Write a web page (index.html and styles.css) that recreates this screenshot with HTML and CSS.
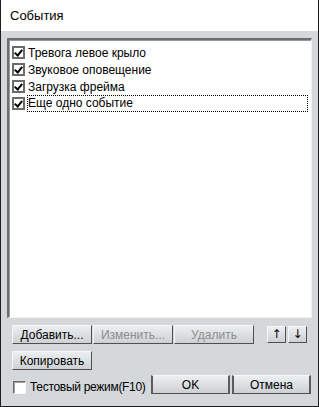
FILE: index.html
```html
<!DOCTYPE html>
<html lang="ru">
<head>
    <meta charset="UTF-8">
    <title>События</title>
    <link rel="stylesheet" href="styles.css">
</head>
<body>
    <div class="window">
        <div class="titlebar">События</div>
        <div class="content">
            <ul class="list">
                <li class="item"><span class="check on"></span>Тревога левое крыло</li>
                <li class="item"><span class="check on"></span>Звуковое оповещение</li>
                <li class="item"><span class="check on"></span>Загрузка фрейма</li>
                <li class="item focus"><span class="check on"></span><span class="label">Еще одно событие</span></li>
            </ul>

            <div class="row">
                <button class="btn">Добавить...</button>
                <button class="btn" disabled>Изменить...</button>
                <button class="btn" disabled>Удалить</button>
                <div class="arrows">
                    <button class="btn small">&#8593;</button>
                    <button class="btn small">&#8595;</button>
                </div>
            </div>

            <div class="row">
                <button class="btn">Копировать</button>
            </div>

            <div class="row footer">
                <label class="test"><span class="check"></span>Тестовый режим(F10)</label>
                <div class="dialog-btns">
                    <button class="btn edge">OK</button>
                    <button class="btn edge">Отмена</button>
                </div>
            </div>
        </div>
    </div>
</body>
</html>
```

FILE: styles.css
```css
body { margin: 0; font-family: "Liberation Sans", Arial, sans-serif; font-size: 12px; color: #000; background: #fff; }

.window { width: 319px; height: 407px; box-sizing: border-box; border: 1px solid #1e1e1e; border-top: none; display: flex; flex-direction: column; }
.titlebar { height: 31px; background: #fff; padding-left: 9px; line-height: 32px; font-size: 13px; }
.content { flex: 1; background: #d4d8db; padding: 7px 6px 0 6px; display: flex; flex-direction: column; }

.list { list-style: none; margin: 0; padding: 4px 3px 0 3px; height: 280px; box-sizing: border-box; background: #fff;
    border-top: 2px solid #6e6e6e; border-left: 2px solid #6e6e6e; border-right: 1px solid #f0f0f0; border-bottom: 1px solid #f0f0f0;
    box-shadow: inset 1px 1px 0 #9a9a9a; }
.item { display: flex; align-items: center; height: 17px; white-space: nowrap; }
.item.focus .label { flex: 1; outline: 1px dotted #000; outline-offset: 0; line-height: 15px; margin-right: 1px; }

.check { width: 13px; height: 13px; box-sizing: border-box; border: 2px solid #6b6b6b; background: #fff; margin-right: 3px; flex: none; position: relative; }
.check.on::after { content: ""; position: absolute; left: 2px; top: 0px; width: 3px; height: 6px; border: solid #000; border-width: 0 2px 2px 0; transform: rotate(40deg); }

.row { display: flex; align-items: center; padding-left: 5px; margin-top: 7px; }
.arrows { margin-left: auto; margin-right: 5px; display: flex; gap: 2px; }

.btn { font: inherit; color: #000; width: 80px; height: 19px; padding: 0; margin-right: 1px; box-sizing: border-box;
    background: linear-gradient(#eceff1, #cdd1d4); border: 1px solid; border-color: #f6f6f6 #505050 #505050 #f6f6f6; }
.btn:disabled { color: #8d8d8d; }
.btn.small { width: 19px; height: 17px; font-family: "DejaVu Sans", sans-serif; font-size: 12px; line-height: 15px; margin: 0; }

.footer { margin-top: 5px; justify-content: space-between; padding-left: 6px; }
.test { display: flex; align-items: center; white-space: nowrap; padding-top: 5px; letter-spacing: -0.3px; }
.test .check { border-width: 1px; border-color: #6b6b6b #f6f6f6 #f6f6f6 #6b6b6b; box-shadow: inset 1px 1px 0 #a0a0a0; margin-right: 4px; }
.dialog-btns { display: flex; gap: 2px; margin-right: 1px; }
.btn.edge { width: 79px; margin: 0; border-left: 2px solid #5c5c5c; border-right: 2px solid #5c5c5c; }
```
